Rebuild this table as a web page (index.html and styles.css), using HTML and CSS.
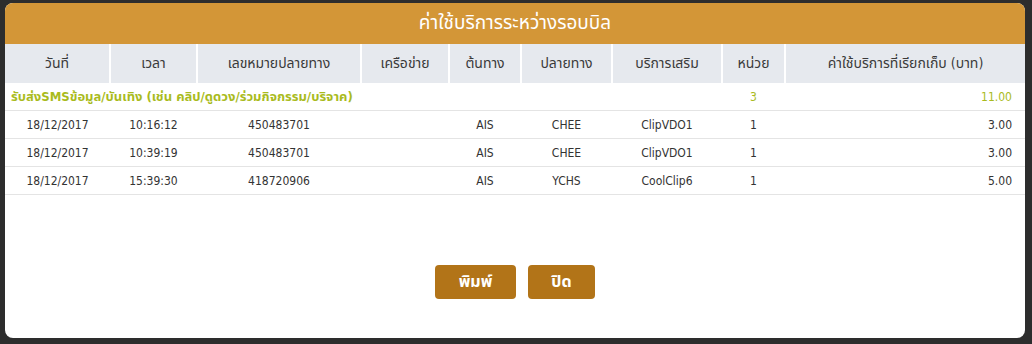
FILE: index.html
```html
<!DOCTYPE html>
<html lang="th">
<head>
    <meta charset="UTF-8">
    <meta name="viewport" content="width=device-width, initial-scale=1.0">
    <title>ค่าใช้บริการระหว่างรอบบิล</title>
    <link rel="stylesheet" href="styles.css">
</head>
<body>
    <div class="backdrop">
        <div class="modal">
            <div class="modal-header">
                <h1>ค่าใช้บริการระหว่างรอบบิล</h1>
            </div>
            <table class="usage-table">
                <colgroup>
                    <col style="width: 105px">
                    <col style="width: 87px">
                    <col style="width: 164px">
                    <col style="width: 88px">
                    <col style="width: 72px">
                    <col style="width: 91px">
                    <col style="width: 110px">
                    <col style="width: 63px">
                    <col>
                </colgroup>
                <thead>
                    <tr>
                        <th>วันที่</th>
                        <th>เวลา</th>
                        <th>เลขหมายปลายทาง</th>
                        <th>เครือข่าย</th>
                        <th>ต้นทาง</th>
                        <th>ปลายทาง</th>
                        <th>บริการเสริม</th>
                        <th>หน่วย</th>
                        <th>ค่าใช้บริการที่เรียกเก็บ (บาท)</th>
                    </tr>
                </thead>
                <tbody>
                    <tr class="group-row">
                        <td colspan="7" class="group-name">รับส่งSMSข้อมูล/บันเทิง (เช่น คลิป/ดูดวง/ร่วมกิจกรรม/บริจาค)</td>
                        <td>3</td>
                        <td class="amount">11.00</td>
                    </tr>
                    <tr>
                        <td>18/12/2017</td>
                        <td>10:16:12</td>
                        <td>450483701</td>
                        <td></td>
                        <td>AIS</td>
                        <td>CHEE</td>
                        <td>ClipVDO1</td>
                        <td>1</td>
                        <td class="amount">3.00</td>
                    </tr>
                    <tr>
                        <td>18/12/2017</td>
                        <td>10:39:19</td>
                        <td>450483701</td>
                        <td></td>
                        <td>AIS</td>
                        <td>CHEE</td>
                        <td>ClipVDO1</td>
                        <td>1</td>
                        <td class="amount">3.00</td>
                    </tr>
                    <tr>
                        <td>18/12/2017</td>
                        <td>15:39:30</td>
                        <td>418720906</td>
                        <td></td>
                        <td>AIS</td>
                        <td>YCHS</td>
                        <td>CoolClip6</td>
                        <td>1</td>
                        <td class="amount">5.00</td>
                    </tr>
                </tbody>
            </table>
            <div class="modal-footer">
                <button class="btn btn-print">พิมพ์</button>
                <button class="btn btn-close">ปิด</button>
            </div>
        </div>
    </div>
</body>
</html>
```

FILE: styles.css
```css
body {
    margin: 0;
    background-color: #2d2d2d;
    font-family: 'DejaVu Sans Condensed', 'DejaVu Sans', 'Noto Sans Thai', sans-serif;
    font-size: 12px;
    color: #333;
}

.backdrop {
    height: 344px;
    padding: 3px 7px 0 5px;
    box-sizing: border-box;
}

.modal {
    background-color: #ffffff;
    border-radius: 8px;
    height: 335px;
    overflow: hidden;
    display: flex;
    flex-direction: column;
}

.modal-header {
    background-color: #d39637;
    height: 41px;
    display: flex;
    align-items: center;
    justify-content: center;
}

.modal-header h1 {
    margin: 0;
    color: #ffffff;
    font-size: 19px;
    font-weight: normal;
}

.usage-table {
    width: 100%;
    border-collapse: collapse;
    table-layout: fixed;
}

.usage-table th {
    background-color: #e6e9ee;
    height: 39px;
    padding: 0;
    font-size: 14px;
    font-weight: normal;
    color: #3a3a3a;
    border-left: 2px solid #ffffff;
    white-space: nowrap;
}

.usage-table th:first-child {
    border-left: none;
}

.usage-table td {
    height: 27px;
    padding: 0;
    text-align: center;
    border-bottom: 1px solid #e4e4e4;
    white-space: nowrap;
}

.usage-table td.amount {
    text-align: right;
    padding-right: 13px;
}

.group-row td {
    color: #a9bb1d;
    height: 26px;
    padding-top: 1px;
}

.group-row td.group-name {
    text-align: left;
    padding-left: 6px;
    font-weight: bold;
    font-size: 13px;
}

.modal-footer {
    display: flex;
    justify-content: center;
    gap: 12px;
    padding-top: 70px;
}

.btn {
    background-color: #b27418;
    color: #ffffff;
    border: none;
    border-radius: 4px;
    height: 34px;
    font-family: inherit;
    font-size: 16px;
    font-weight: bold;
    cursor: pointer;
}

.btn-print {
    width: 81px;
}

.btn-close {
    width: 67px;
}
```
